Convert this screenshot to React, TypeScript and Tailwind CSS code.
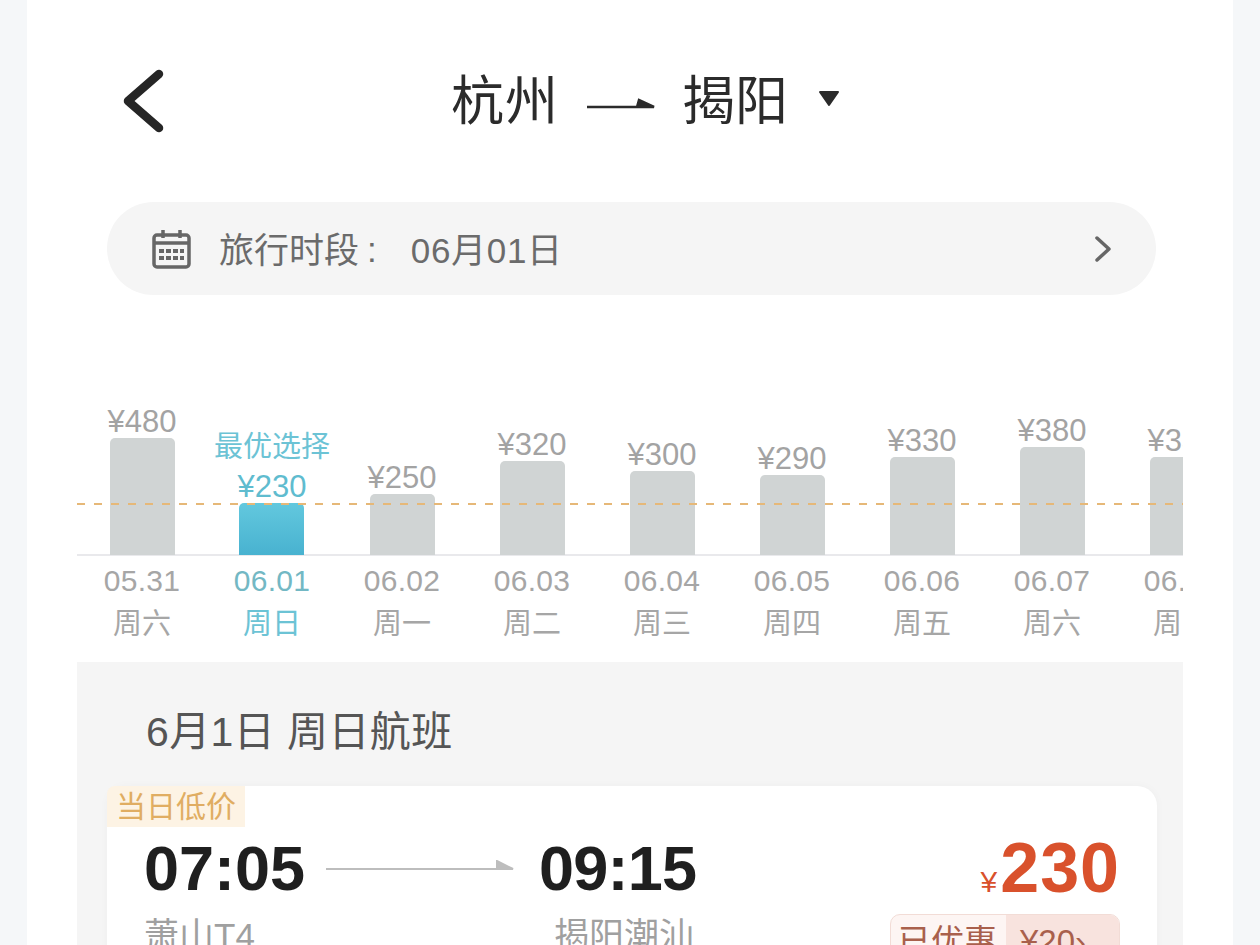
const font = '"Liberation Sans", "Noto Sans CJK SC", sans-serif';

const days = [
  { price: "¥480", h: 117, date: "05.31", week: "周六" },
  { price: "¥230", h: 52, date: "06.01", week: "周日", best: true },
  { price: "¥250", h: 61, date: "06.02", week: "周一" },
  { price: "¥320", h: 94, date: "06.03", week: "周二" },
  { price: "¥300", h: 84, date: "06.04", week: "周三" },
  { price: "¥290", h: 80, date: "06.05", week: "周四" },
  { price: "¥330", h: 98, date: "06.06", week: "周五" },
  { price: "¥380", h: 108, date: "06.07", week: "周六" },
  { price: "¥330", h: 98, date: "06.08", week: "周日" },
];

function DayColumn({ day }: { day: (typeof days)[number] }) {
  return (
    <div className="flex w-[130px] shrink-0 flex-col items-center">
      <div className="flex h-[175px] flex-col items-center justify-end">
        {day.best && <div className="mb-[7px] text-[29px] leading-[32px] whitespace-nowrap text-[#6cc3d5]">最优选择</div>}
        <div className={"-mb-[1px] text-[31px] leading-[34px] " + (day.best ? "text-[#5fbccf]" : "text-[#a3a3a3]")}>{day.price}</div>
        <div
          className={"w-[65px] rounded-t-[5px] " + (day.best ? "bg-gradient-to-b from-[#62c8de] to-[#48b2d0]" : "bg-[#d0d4d4]")}
          style={{ height: day.h }}
        />
      </div>
      <div className={"mt-[8px] text-[30px] leading-[36px] tracking-[0.3px] " + (day.best ? "text-[#73b8c4]" : "text-[#a6a6a6]")}>{day.date}</div>
      <div className={"mt-[7px] text-[29px] leading-[36px] " + (day.best ? "text-[#6cc3d5]" : "text-[#a6a6a6]")}>{day.week}</div>
    </div>
  );
}

export default function App() {
  return (
    <div className="h-[945px] overflow-hidden bg-[#f5f7f9] px-[27px]" style={{ fontFamily: font }}>
      <div className="h-full bg-white px-[50px]">
        {/* header */}
        <div className="relative flex h-[202px] items-start justify-center pt-[71px] pl-[31px]">
          <svg className="absolute top-[68px] left-[45px]" width="44" height="66" viewBox="0 0 44 66" fill="none">
            <path d="M37 6 L6 33 L37 60" stroke="#262626" strokeWidth="8.5" strokeLinecap="round" strokeLinejoin="round" />
          </svg>
          <div className="flex h-[62px] items-center text-[#2b2b2b]">
            <span className="text-[53px] leading-[62px] tracking-[1px]">杭州</span>
            <svg className="mt-[4px] mr-[27px] ml-[28px]" width="68" height="14" viewBox="0 0 68 14">
              <path d="M0 10 H67 L52 3 L50 10" fill="#2b2b2b" stroke="#2b2b2b" strokeWidth="2.5" />
            </svg>
            <span className="text-[53px] leading-[62px]">揭阳</span>
            <svg className="mb-[8px] ml-[30px]" width="22" height="17" viewBox="0 0 22 17">
              <path d="M2 2 H20 L11 15 Z" fill="#2b2b2b" stroke="#2b2b2b" strokeWidth="2" strokeLinejoin="round" />
            </svg>
          </div>
        </div>

        {/* date pill */}
        <div className="mr-[27px] ml-[30px] flex h-[93px] items-center rounded-full bg-[#f5f5f5] pr-[44px] pl-[45px] text-[#6b6b6b]">
          <svg width="39" height="40" viewBox="0 0 39 40" fill="none">
            <rect x="2" y="6" width="35" height="32" rx="3" stroke="#666" strokeWidth="3.5" />
            <path d="M2 14 H37" stroke="#666" strokeWidth="3.5" />
            <path d="M11 1 V9 M28 1 V9" stroke="#666" strokeWidth="3.5" />
            <path d="M7 22 H32 M7 29 H32" stroke="#666" strokeWidth="4" strokeDasharray="5 2" />
          </svg>
          <span className="mt-[4px] ml-[28px] text-[35px] leading-none">旅行时段</span>
          <span className="mt-[2px] ml-[8px] text-[35px] leading-none">:</span>
          <span className="mt-[4px] ml-[34px] text-[35px] leading-none tracking-[0.7px]">06月01日</span>
          <svg className="ml-auto" width="18" height="26" viewBox="0 0 18 26" fill="none">
            <path d="M3 2 L15 13 L3 24" stroke="#666" strokeWidth="3.5" strokeLinecap="round" strokeLinejoin="round" />
          </svg>
        </div>

        {/* price chart */}
        <div className="relative mt-[85px] h-[282px] overflow-hidden">
          <div className="absolute top-[123px] right-0 left-0 z-10 h-[2px] bg-[repeating-linear-gradient(90deg,#e6b878_0,#e6b878_8px,transparent_8px,transparent_17px)]" />
          <div className="absolute top-[174px] right-0 left-0 h-[2px] bg-[#e9e9ec]" />
          <div className="relative flex">
            {days.map((day) => (
              <DayColumn key={day.date} day={day} />
            ))}
          </div>
        </div>

        {/* flights */}
        <div className="h-[400px] bg-[#f5f5f5] pr-[26px] pl-[30px]">
          <div className="pt-[47px] pl-[39px] text-[41px] leading-[46px] tracking-[0.4px] text-[#555]">6月1日 周日航班</div>
          <div className="relative mt-[31px] h-[300px] rounded-[20px] bg-white shadow-[0_0_10px_rgba(0,0,0,0.03)]">
            <div className="absolute top-0 left-0 flex h-[41px] w-[138px] items-center justify-center rounded-tl-[8px] bg-[#fdf3e4] text-[30px] leading-none text-[#e0ad62]">
              当日低价
            </div>
            <div className="flex items-start pt-[50px] pr-[37px] pl-[37px]">
              <div className="w-[160px]">
                <div className="text-[63px] leading-[64px] font-bold text-[#1f1f1f]">07:05</div>
                <div className="mt-[15px] text-[35px] leading-[42px] text-[#a0a0a0]">萧山T4</div>
              </div>
              <svg className="mt-[24px] ml-[21px]" width="190" height="14" viewBox="0 0 190 14">
                <path d="M1 9 H188 L172 1 V9" fill="#bdbdbd" stroke="#bdbdbd" strokeWidth="2" />
              </svg>
              <div className="ml-[24px]">
                <div className="text-[63px] leading-[64px] font-bold tracking-[-0.8px] text-[#1f1f1f]">09:15</div>
                <div className="mt-[15px] ml-[15px] text-[35px] leading-[42px] text-[#a0a0a0]">揭阳潮汕</div>
              </div>
              <div className="ml-auto flex flex-col items-end">
                <div className="-mt-[2px] flex items-baseline text-[#d9512c]">
                  <span className="mr-[3px] text-[30px] leading-none">¥</span>
                  <span className="text-[70px] leading-[68px] font-bold tracking-[1px]">230</span>
                </div>
                <div className="mt-[12px] flex h-[60px] w-[230px] overflow-hidden rounded-[10px] border border-[#f2dcd6] bg-[#fdf5f3] text-[33px] leading-[40px] text-[#a9604c]">
                  <span className="flex-1 pt-[7px] pl-[7px]">已优惠</span>
                  <span className="w-[113px] bg-[#f8e3de] pt-[7px] pl-[14px]">¥20›</span>
                </div>
              </div>
            </div>
          </div>
        </div>
      </div>
    </div>
  );
}
